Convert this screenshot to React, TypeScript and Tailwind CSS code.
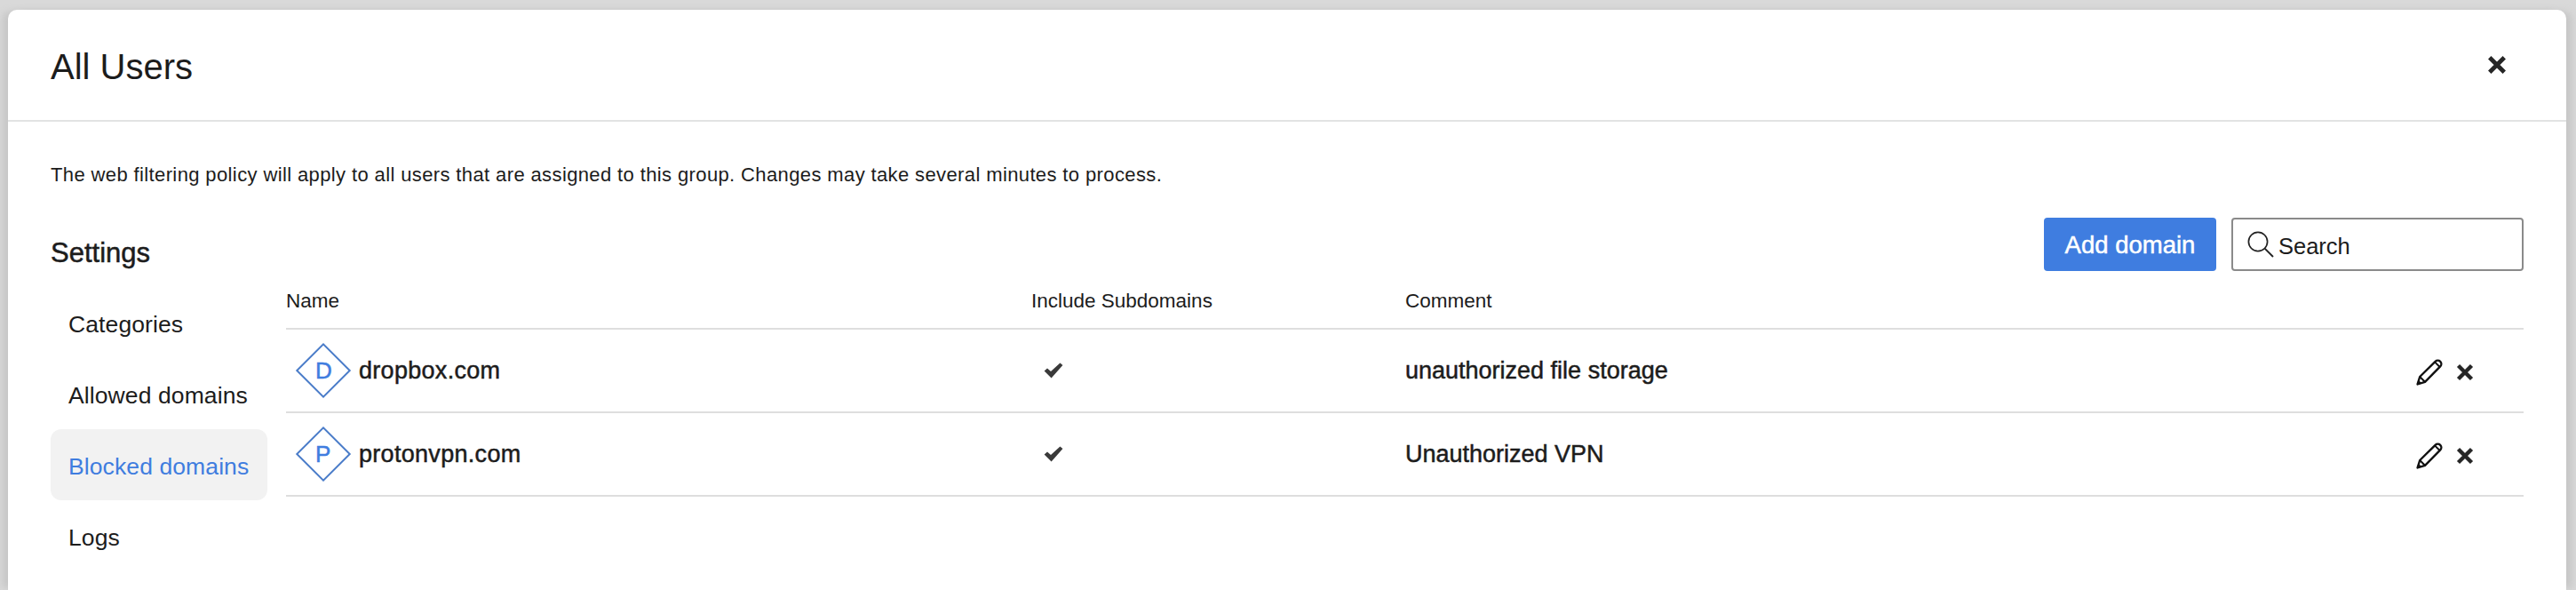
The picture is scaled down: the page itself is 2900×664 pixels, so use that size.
const FONT = "font-['Liberation_Sans',Arial,sans-serif]";
const MEDIUM = "[-webkit-text-stroke:0.5px_currentColor]";

const MENU = ["Categories", "Allowed domains", "Blocked domains", "Logs"];

const DOMAINS = [
  { letter: "D", name: "dropbox.com", comment: "unauthorized file storage" },
  { letter: "P", name: "protonvpn.com", comment: "Unauthorized VPN" },
];

function CloseIcon({ size }: { size: number }) {
  return (
    <svg width={size} height={size} viewBox="0 0 20 20" fill="none" aria-hidden="true">
      <path d="M2.5 2.5 17.5 17.5M17.5 2.5 2.5 17.5" stroke="#262626" strokeWidth="4.4" />
    </svg>
  );
}

function PencilIcon() {
  return (
    <svg width="30" height="30" viewBox="0 0 30 30" fill="none" aria-hidden="true">
      <path
        d="M1.6 28.4 4.2 20 21.6 2.8a4 4 0 0 1 5.6 0 4 4 0 0 1 0 5.6L10 25.8Z"
        stroke="#111"
        strokeWidth="2.4"
        strokeLinejoin="round"
      />
      <path d="M4.2 20 10 25.8M21 3.4l5.6 5.6" stroke="#111" strokeWidth="2" />
      <path d="M1 29 2.4 23.4 6.6 27.6Z" fill="#111" />
    </svg>
  );
}

function CheckIcon() {
  return (
    <svg width="22" height="18" viewBox="0 0 22 18" fill="none" aria-hidden="true">
      <path d="M0.6 9.4 4 6.4 8 10 18.4 0.4 21.4 3 8.6 17.6Z" fill="#3a3a3a" />
    </svg>
  );
}

function SearchIcon() {
  return (
    <svg width="30" height="30" viewBox="0 0 30 30" fill="none" aria-hidden="true">
      <circle cx="12" cy="12" r="10.6" stroke="#222" strokeWidth="1.7" />
      <path d="M19.6 19.6 29 29" stroke="#222" strokeWidth="1.9" />
    </svg>
  );
}

function DomainBadge({ letter }: { letter: string }) {
  return (
    <span className="flex h-[63px] w-[63px] shrink-0 items-center justify-center">
      <span className="flex h-[44px] w-[44px] rotate-45 items-center justify-center border-2 border-[#4a7cc9]">
        <span className={`-rotate-45 text-[26px] leading-none text-[#3f7ddf] ${MEDIUM}`}>{letter}</span>
      </span>
    </span>
  );
}

export default function App() {
  return (
    <div className={`h-[664px] w-[2900px] overflow-hidden bg-[#d9d9d9] pl-[9px] pr-[11px] pt-[11px] ${FONT}`}>
      <div className="h-[653px] rounded-t-[10px] bg-white text-[#1c1c1c] shadow-[-8px_0_8px_-2px_#c6c6c6,8px_0_8px_-2px_#c6c6c6]">
        <header className="flex h-[126px] items-center justify-between border-b-2 border-[#e2e3e3] pl-[48px] pr-[67px]">
          <h1 className="pt-[3px] text-[40px] leading-none">All Users</h1>
          <button type="button" aria-label="Close">
            <CloseIcon size={22} />
          </button>
        </header>

        <div className="px-[48px] pt-[42px]">
          <p className="h-[66px] pt-[2px] text-[22px] leading-[32px] tracking-[0.38px]">
            The web filtering policy will apply to all users that are assigned to this group. Changes may take several minutes to process.
          </p>

          <div className="flex gap-[21px]">
            <aside className="w-[244px] shrink-0">
              <h2 className={`flex h-[78px] items-center text-[31px] leading-none ${MEDIUM}`}>Settings</h2>
              <nav className="flex flex-col">
                {MENU.map((label) => (
                  <a
                    key={label}
                    className={
                      label === "Blocked domains"
                        ? "flex h-[80px] items-center rounded-[12px] bg-[#f2f2f2] pl-[20px] pt-[5px] text-[26.5px] tracking-[0.1px] text-[#3f7ddf]"
                        : "flex h-[80px] items-center pl-[20px] pt-[5px] text-[26.5px] tracking-[0.1px]"
                    }
                  >
                    {label}
                  </a>
                ))}
              </nav>
            </aside>

            <section className="min-w-0 flex-1">
              <div className="flex h-[60px] justify-end gap-[17px]">
                <button
                  type="button"
                  className={`w-[194px] rounded-[4px] bg-[#3f7de0] pt-[1px] text-[27.5px] text-white ${MEDIUM}`}
                >
                  Add domain
                </button>
                <div className="flex w-[329px] items-center gap-[5px] rounded-[4px] border-2 border-[#8a8a8a] pl-[16px]">
                  <SearchIcon />
                  <span className="pt-[5px] text-[25.5px]">Search</span>
                </div>
              </div>

              <div className="grid h-[66px] grid-cols-[839px_421px_1fr] items-center border-b-2 border-[#dedede] pt-[3px] text-[22.5px]">
                <span>Name</span>
                <span>Include Subdomains</span>
                <span>Comment</span>
              </div>

              {DOMAINS.map((d) => (
                <div
                  key={d.name}
                  className="grid h-[94px] grid-cols-[839px_421px_1fr_auto] items-center border-b-2 border-[#dedede] pr-[56px] text-[27px]"
                >
                  <div className={`flex items-center gap-[9px] pl-[10px] ${MEDIUM}`}>
                    <DomainBadge letter={d.letter} />
                    <span className="tracking-[0.3px]">{d.name}</span>
                  </div>
                  <div className="pl-[14px]">
                    <CheckIcon />
                  </div>
                  <span className={MEDIUM}>{d.comment}</span>
                  <div className="flex items-center gap-[15px] pt-[3px]">
                    <PencilIcon />
                    <CloseIcon size={20} />
                  </div>
                </div>
              ))}
            </section>
          </div>
        </div>
      </div>
    </div>
  );
}
